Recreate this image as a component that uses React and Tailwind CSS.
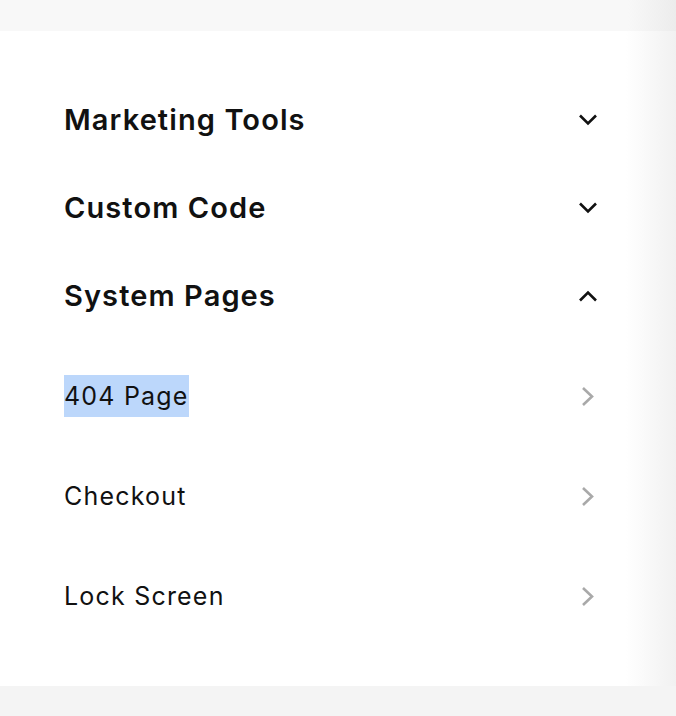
import React from "react";

function ChevronDown({ up = false }) {
  return (
    <svg width="20" height="14" viewBox="0 0 20 14" className="block">
      <path
        d={up ? "M2 11.5 L10 3.5 L18 11.5" : "M2 2.5 L10 10.5 L18 2.5"}
        fill="none"
        stroke="#111111"
        strokeWidth="2.6"
        strokeLinecap="butt"
        strokeLinejoin="miter"
      />
    </svg>
  );
}

function ChevronRight() {
  return (
    <svg width="15" height="21" viewBox="0 0 15 21" className="block">
      <path d="M3 2 L12 10.5 L3 19" fill="none" stroke="#a9a9a9" strokeWidth="2.6" />
    </svg>
  );
}

export default function App() {
  const headings = [
    { label: "Marketing Tools", up: false },
    { label: "Custom Code", up: false },
    { label: "System Pages", up: true },
  ];
  const subs = ["404 Page", "Checkout", "Lock Screen"];
  return (
    <div className="w-[676px] h-[716px] overflow-hidden flex flex-col font-['Inter',sans-serif]">
      <div className="h-[31px] shrink-0 bg-[linear-gradient(to_right,#f8f8f8_calc(100%-48px),#ececec)]" />
      <div className="h-[655px] shrink-0 bg-[linear-gradient(to_right,#ffffff_calc(100%-50px),#f1f1f1)] pt-[45px] pl-[64px] pr-[78px]">
        {headings.map((h) => (
          <div key={h.label} className="h-[88px] flex items-center justify-between">
            <span className="text-[29px] font-[560] tracking-[1.1px] text-[#111111]">{h.label}</span>
            <ChevronDown up={h.up} />
          </div>
        ))}
        <div className="mt-[6px]">
          {subs.map((s, i) => (
            <div key={s} className="h-[100px] flex items-center justify-between">
              <span
                className={
                  "text-[25px] leading-[42px] text-[#111111] tracking-[1.2px] " +
                  (i === 0 ? "bg-[#bcd7fb]" : "")
                }
              >
                {s}
              </span>
              <span className="mr-[3px]">
                <ChevronRight />
              </span>
            </div>
          ))}
        </div>
      </div>
      <div className="h-[30px] shrink-0 bg-[#f4f4f4]" />
    </div>
  );
}
